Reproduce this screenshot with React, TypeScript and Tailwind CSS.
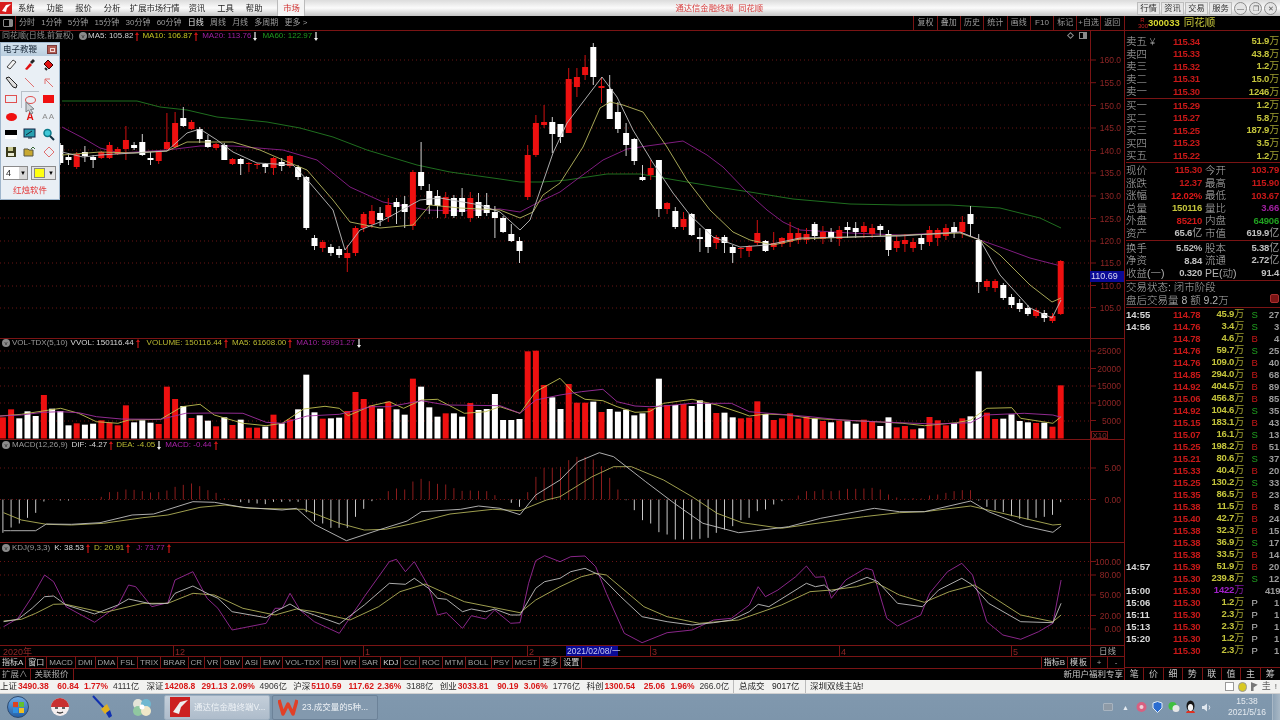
import React from "react";

const LINE = "#7a1414";
const AXIS = "#8f2626";
const X = (i: number) => 2.9 + i * 8.2;

// r = 涨 w = 跌
const colors =
  "rrwwwrwwwr" + "wwrrrrwwwr" + "rrwrwwrwrw" + "rrwrwrwwwr" + "wwrrrrwrww" + "rwwwrwwrww" + "wwwwrrrw" +
  "wrrrwrwwww" + "wrwrwrwwwr" + "wwrrrwrrrr" + "rwrwrwwrrw" + "wrrrwrrrwr" + "wwrrwwwwrw" + "rr";

const volA = [247,223,250,229,243,180,221,228,271,265,269,266,256,263,271,211,262,256,263,267,155,192,213,249,241,257,274,247,270,254,278,278,275,239,265,253,223,119,232,251,250,248,228,171,192,211,221,200,223,239,131,155,217,245,235,235,245,204,225,222,177,255,255,252,49,47,150,187];
const volB = [207,132,188,188,185,216,207,215,209,226,220,205,116,195,195,192,198,181,190,219,218,232,235,233,184,222,240,235,220,236,230,236,243,247,242,244,251,239,243,258,232,262,258,268,265,231,241,256,249,235,229,94,218,237,236,223,243,247,249,248,260,136];
const volTops = [...volA.map((t) => 335 + t / 3), ...volB.map((t) => 340 + t / 3)];

const macd = [-100,-84,-72,-55,-40,-6,0,-3,-3,0,2,1,8,22,23,30,29,25,21,22,27,38,44,48,40,28,20,4,0,-8,-10,-12,-14,-7,-7,-6,-7,-38,-65,-72,-85,-85,-85,-52,-28,-5,3,25,33,30,54,62,55,47,45,34,26,27,26,25,13,1,-10,-22,22,68,95,95,98,118,128,128,120,100,65,30,-2,-32,-62,-72,-98,-105,-120,-120,-120,-118,-115,-100,-90,-80,-62,-55,-35,-30,-15,-5,2,12,25,25,30,25,27,32,32,33,35,30,15,6,3,4,3,12,15,20,25,28,28,-3,-22,-32,-38,-50,-58,-60,-55,-52,-46,-8];

// 从第 7 根开始: 实体上, 实体下, 最高, 最低
const candles: number[][] = [
  [145,163,143,165],[157,160,153,165],[154,167,152,169],[152,156,146,162],[157,160,155,168],[152,158,151,159],[145,158,142,159],[149,154,147,155],[140,149,126,160],[145,148,142,150],
  [142,155,134,156],[158,160,152,165],[152,161,151,164],[142,149,113,150],[123,147,112,148],[118,126,107,127],[122,129,120,130],[129,139,127,143],[140,147,135,148],[144,148,143,150],
  [145,160,143,160],[159,164,158,165],[159,164,158,175],[163,164,162,172],[164,165,163,169],[164,167,163,173],[158,168,157,175],[162,166,158,171],[156,166,155,168],[167,177,165,180],
  [177,228,176,230],[238,246,235,250],[242,248,240,252],[247,253,244,256],[249,255,246,258],[253,258,245,272],[228,253,226,256],[214,228,212,232],[211,224,205,228],[213,220,207,226],
  [205,217,198,222],[202,207,198,224],[204,212,196,228],[172,226,170,230],[172,186,142,190],[191,205,184,214],[196,206,190,218],[197,214,192,218],[198,216,195,218],[198,212,188,216],
  [198,218,192,222],[202,216,193,218],[205,213,193,216],[212,218,206,238],[218,232,216,233],[234,241,224,242],[241,251,237,263],[155,197,145,200],[123,155,115,157],[122,125,105,128],
  [122,134,117,153],[124,137,124,143],[79,133,68,133],[77,87,68,97],[67,75,55,80],[47,77,43,85],[86,88,77,103],[89,119,75,119],[112,129,102,133],[133,145,123,156],
  [139,161,138,165],[177,180,165,181],[168,175,160,180],[160,209,160,217],[203,209,202,214],[211,227,207,229],[219,227,212,230],[214,235,213,236],[237,239,228,252],[229,247,229,253],
  [237,243,235,249],[237,243,235,253],[247,253,245,263],[248,249,247,258],[246,251,245,257],[233,243,220,245],[241,251,240,252],[243,247,232,250],[238,244,237,247],[233,242,222,247],
  [233,240,228,244],[234,240,228,244],[224,236,222,240],[232,239,226,244],[232,238,228,242],[230,239,226,246],[227,230,222,238],[228,232,222,238],[226,232,222,238],[228,234,224,238],
  [226,230,224,236],[234,250,230,256],[241,248,236,252],[240,244,234,252],[242,248,238,252],[238,244,234,250],[230,242,226,246],[230,238,228,246],[228,236,224,240],[227,232,222,238],
  [222,232,216,238],[214,224,206,236],[240,282,234,293],[281,287,279,291],[281,288,279,292],[285,298,283,300],[297,305,294,308],[303,309,299,312],[308,314,305,316],[310,316,308,318],
  [313,318,310,322],[316,321,313,323],[261,314,260,315],
];

const ma60 = "62,101 137,101 160,107 187,110 217,117 267,122 300,128 333,137 367,150 417,165 450,172 500,179 520,182 543,182 567,180 607,174 640,174 687,182 717,187 750,192 793,199 850,204 900,205 950,205 1000,208 1040,218 1061,228";
const ma20 = "62,127 83,138 100,148 120,153 167,150 200,146 233,146 283,150 317,160 350,187 383,202 427,210 460,211 500,209 520,212 537,203 560,192 580,177 603,160 627,149 647,146 683,141 707,155 723,167 747,192 767,210 783,222 800,230 850,233 900,235 960,232 980,240 1000,247 1030,258 1061,266";
const ma10 = "62,155 100,152 133,153 167,151 187,142 233,142 260,150 283,160 307,170 333,200 350,222 380,228 413,225 430,205 460,208 500,210 520,218 533,212 543,195 560,183 583,147 600,108 610,102 623,105 643,112 667,147 687,180 710,210 733,232 750,240 773,245 800,239 880,236 960,233 980,240 1000,255 1030,285 1052,302 1061,298";
const ma5 = "62,152 83,157 100,155 133,153 167,151 187,133 200,129 217,140 233,152 257,163 293,165 310,183 333,210 345,250 360,230 380,222 420,200 440,198 480,205 500,212 520,230 530,220 553,153 567,123 602,77 617,97 633,130 653,163 673,193 690,215 713,237 740,247 767,245 800,238 900,236 960,232 980,240 1000,275 1030,308 1052,318 1061,300";

const pts = (ox: number, oy: number, raw: number[][]) => raw.map(([x, y]) => `${(ox + x / 2.8).toFixed(1)},${(oy + y / 3).toFixed(1)}`).join(" ");

const volY = pts(0, 335, [[0,243],[60,238],[120,228],[170,220],[220,235],[270,260],[330,265],[360,255],[450,253],[510,215],[560,208],[600,240],[680,265],[745,272],[790,265],[850,222],[910,214],[950,220],[975,242],[1040,212],[1090,200],[1130,220],[1180,195],[1225,193],[1300,235],[1360,230],[1400,215],[1456,235],[1500,170]]) + " " + pts(560, 340, [[0,115],[40,160],[70,178],[120,182],[160,200],[210,217],[250,215],[290,190],[370,178],[440,195],[510,220],[530,228],[580,222],[640,225],[700,235],[790,240],[880,245],[960,250],[1020,257],[1110,248],[1150,240],[1195,205],[1265,203],[1290,235],[1380,250],[1403,230]]);
const volP = pts(0, 335, [[0,243],[60,240],[120,232],[170,230],[220,233],[270,245],[340,252],[450,253],[520,235],[600,234],[680,235],[745,262],[790,265],[860,243],[950,238],[1040,215],[1090,215],[1180,197],[1250,210],[1400,212],[1456,235],[1500,195]]) + " " + pts(560, 340, [[0,165],[60,155],[120,148],[160,185],[210,198],[250,200],[290,198],[370,190],[480,190],[530,215],[700,230],[790,240],[880,245],[950,248],[1050,252],[1150,248],[1190,225],[1300,220],[1380,225],[1403,232]]);

const difL = pts(0, 440, [[10,272],[30,272],[100,272],[130,252],[200,253],[280,248],[370,225],[430,222],[540,185],[600,187],[680,202],[790,210],[830,205],[880,253],[970,302],[1060,270],[1140,243],[1180,215],[1290,208],[1340,198],[1400,205],[1456,224],[1500,165]]) + " " + pts(560, 340, [[0,420],[50,365],[110,338],[150,350],[240,425],[320,490],[400,550],[500,578],[550,572],[640,560],[730,535],[880,505],[950,515],[1020,515],[1150,483],[1200,515],[1300,558],[1380,577],[1403,558]]);
const deaL = pts(0, 440, [[10,218],[60,240],[130,253],[200,255],[290,250],[400,233],[470,225],[560,202],[630,195],[700,205],[850,208],[950,250],[1020,270],[1080,268],[1150,252],[1260,222],[1380,208],[1456,212],[1530,180]]) + " " + pts(560, 340, [[0,470],[90,410],[150,380],[200,380],[290,420],[370,470],[440,520],[510,548],[620,565],[850,530],[950,518],[1020,515],[1150,498],[1280,530],[1380,555],[1403,553]]);

const kdjJ = pts(0, 440, [[10,560],[50,535],[90,470],[125,405],[150,425],[185,500],[265,547],[330,497],[360,435],[380,440],[425,500],[470,488],[490,420],[540,395],[580,475],[610,505],[650,570],[745,550],[770,505],[790,505],[812,460],[840,510],[880,545],[950,580],[1020,470],[1090,365],[1110,358],[1135,395],[1160,365],[1200,440],[1225,525],[1250,518],[1295,565],[1320,527],[1360,537],[1385,510],[1430,550],[1456,548],[1480,430],[1500,362],[1525,347]]) + " " + pts(560, 340, [[0,665],[30,650],[70,648],[100,680],[130,760],[180,880],[230,908],[300,878],[370,870],[430,840],[480,835],[530,795],[555,740],[575,770],[610,750],[660,710],[690,678],[715,712],[740,710],[760,775],[800,720],[855,685],[875,690],[915,835],[945,858],[1010,825],[1035,760],[1085,695],[1125,670],[1155,705],[1195,845],[1240,885],[1290,898],[1340,875],[1380,850],[1403,720]]);
const kdjK = pts(0, 440, [[10,545],[50,538],[90,505],[125,470],[150,468],[185,495],[265,522],[330,495],[360,477],[425,492],[470,490],[490,460],[540,438],[580,460],[610,475],[650,515],[745,533],[770,515],[812,492],[840,510],[880,525],[950,552],[1020,495],[1090,430],[1135,433],[1160,415],[1200,445],[1225,475],[1250,478],[1295,515],[1320,507],[1360,515],[1385,507],[1430,525],[1456,525],[1500,445],[1525,425]]) + " " + pts(560, 340, [[0,715],[30,695],[70,685],[110,705],[170,770],[230,830],[300,845],[370,855],[430,848],[480,840],[530,815],[555,793],[585,800],[690,730],[715,740],[740,735],[760,755],[860,712],[890,725],[945,790],[1015,800],[1060,750],[1125,715],[1155,735],[1200,790],[1290,845],[1380,848],[1403,790]]);
const kdjD = pts(0, 440, [[10,543],[60,538],[100,520],[150,493],[180,492],[290,518],[400,490],[470,490],[540,460],[600,465],[680,505],[770,525],[830,507],[880,515],[980,540],[1060,500],[1120,455],[1190,432],[1300,485],[1456,518],[1500,480]]) + " " + pts(560, 340, [[0,740],[60,710],[100,700],[130,705],[235,800],[300,830],[390,850],[500,840],[620,795],[700,755],[760,750],[830,740],[880,725],[950,765],[1020,787],[1090,755],[1160,735],[1290,825],[1380,845],[1403,825]]);

const Line = ({ p, c }: { p: string; c: string }) => <polyline points={p} fill="none" stroke={c} strokeWidth={0.9} strokeLinejoin="round" />;

function Arrow({ up }: { up?: boolean }) {
  return (
    <svg width="4" height="9" viewBox="0 0 4 9" className="shrink-0">
      {up ? <path d="M2 0 L4 3 H2.6 V9 H1.4 V3 H0 Z" fill="#c81414" /> : <path d="M2 9 L4 6 H2.6 V0 H1.4 V6 H0 Z" fill="#eeeeee" />}
    </svg>
  );
}

const Dot = () => (
  <span className="w-[8px] h-[8px] rounded-full bg-[#8a8a8a] shrink-0 flex items-center justify-center text-[6px] leading-none text-[#222]">v</span>
);

function Panel({ top, h, ticks, grid, children, labels }: { top: number; h: number; ticks: [string, number][]; grid: number[]; children: React.ReactNode; labels?: React.ReactNode }) {
  return (
    <div className="relative w-full shrink-0" style={{ height: h }}>
      <svg width="1124" height={h} viewBox={`0 ${top} 1124 ${h}`} className="block text-[8.5px]">
        {grid.map((y) => (
          <line key={y} x1="0" x2="1090" y1={y} y2={y} stroke="#6a1414" strokeWidth="1" strokeDasharray="1 3" />
        ))}
        {children}
        <line x1="0" x2="1124" y1={top + 0.5} y2={top + 0.5} stroke={LINE} />
        <line x1="1090.5" x2="1090.5" y1={top} y2={top + h} stroke={LINE} />
        {ticks.map(([t, y]) => (
          <g key={t}>
            <line x1="1091" x2="1096" y1={y} y2={y} stroke={LINE} />
            <text x="1121" y={y + 3} textAnchor="end" fill={AXIS}>{t}</text>
          </g>
        ))}
      </svg>
      {labels}
    </div>
  );
}

type LegendItem = { t: string; c: string; up?: boolean; down?: boolean; ml?: string };

function Legend({ items, cls }: { items: LegendItem[]; cls: string }) {
  return (
    <div className={`absolute flex items-center h-[10px] text-[8px] leading-none whitespace-nowrap ${cls}`}>
      {items.map((it, i) => (
        <React.Fragment key={i}>
          <span className={it.ml} style={{ color: it.c }}>{it.t}</span>
          {it.up && <span className="ml-[2px]"><Arrow up /></span>}
          {it.down && <span className="ml-[2px]"><Arrow /></span>}
        </React.Fragment>
      ))}
    </div>
  );
}

const Tool = ({ children, on }: { children: React.ReactNode; on?: boolean }) => (
  <div className={`h-[17.4px] flex items-center justify-center ${on ? "border-l border-t border-[#b8c0c8]" : ""}`}>{children}</div>
);

function Toolbox() {
  return (
    <div className="absolute left-0 top-[12px] w-[60px] h-[158px] bg-[#e9eff5] border border-[#9fb6cc] flex flex-col">
      <div className="h-[13px] bg-gradient-to-b from-[#d4e2ee] to-[#b9cede] flex items-center justify-between pl-[2px] pr-[2px] text-[8.5px] text-[#1a2a3a]">
        <span>电子教鞭</span>
        <span className="w-[10px] h-[9px] bg-[#b05a50] border border-[#7a3a3a] flex items-center justify-center">
          <span className="w-[5px] h-[4px] border border-[#f0d8d8]" />
        </span>
      </div>
      <div className="grid grid-cols-3 px-[1px]">
        <Tool><svg width="13" height="13" viewBox="0 0 13 13"><path d="M2 9 L8 2 L11 4 L5 11 Z" fill="#f4f4f4" stroke="#444" /></svg></Tool>
        <Tool><svg width="13" height="13" viewBox="0 0 13 13"><path d="M2 11 L7 5 L9 7 L4 12 Z" fill="#e01010" /><path d="M7 4 L10 1 L12 3 L9 6 Z" fill="#222" /></svg></Tool>
        <Tool><svg width="13" height="13" viewBox="0 0 13 13"><path d="M2 6 L6 2 L11 7 L7 11 Z" fill="#e01010" stroke="#300" /><path d="M3 10 L5 12" stroke="#222" strokeWidth="2" /></svg></Tool>
        <Tool><svg width="13" height="13" viewBox="0 0 13 13"><path d="M1 2 L4 1 L12 9 L11 12 L8 11 Z" fill="#ddd" stroke="#222" /></svg></Tool>
        <Tool><svg width="13" height="13" viewBox="0 0 13 13"><path d="M2 2 L11 11" stroke="#e07070" /></svg></Tool>
        <Tool><svg width="13" height="13" viewBox="0 0 13 13"><path d="M11 11 L3 3 M3 3 H8 M3 3 V8" stroke="#e07070" fill="none" /></svg></Tool>
        <Tool><span className="w-[12px] h-[8px] border border-[#e05050]" /></Tool>
        <Tool on><span className="w-[11px] h-[8px] border border-[#e05050] rounded-[50%]" /></Tool>
        <Tool><span className="w-[11px] h-[8px] bg-[#f01010]" /></Tool>
        <Tool><span className="w-[11px] h-[8px] bg-[#f01010] rounded-[50%]" /></Tool>
        <Tool><span className="text-[10px] font-bold text-[#e01010] leading-none">A</span></Tool>
        <Tool><span className="text-[8px] text-[#8a8a8a] leading-none tracking-[1px]">AA</span></Tool>
        <Tool><span className="w-[12px] h-[9px] bg-gradient-to-b from-black from-60% to-white to-60%" /></Tool>
        <Tool><svg width="13" height="12" viewBox="0 0 13 12"><rect x="1" y="1" width="11" height="8" fill="#28a0b0" stroke="#124" /><path d="M3 7 L9 3 M5 10 H9" stroke="#123" /></svg></Tool>
        <Tool><svg width="13" height="13" viewBox="0 0 13 13"><circle cx="5.5" cy="5" r="3.5" fill="#40c8d8" stroke="#0a7a8a" strokeWidth="1.5" /><path d="M8 8 L12 12" stroke="#103040" strokeWidth="2" /></svg></Tool>
        <Tool><svg width="12" height="12" viewBox="0 0 12 12"><rect x="1" y="1" width="10" height="10" fill="#3a3a1a" /><rect x="3" y="1" width="5" height="4" fill="#c8c890" /><rect x="3" y="7" width="6" height="3" fill="#e8e8d0" /></svg></Tool>
        <Tool><svg width="13" height="12" viewBox="0 0 13 12"><path d="M1 3 H5 L6 4 H10 V10 H1 Z" fill="#c8a830" stroke="#554" /><path d="M8 3 L10 1 L12 3" stroke="#363" fill="none" /></svg></Tool>
        <Tool><svg width="12" height="12" viewBox="0 0 12 12"><path d="M6 1 L11 6 L6 11 L1 6 Z" fill="none" stroke="#e07070" /></svg></Tool>
      </div>
      <div className="flex gap-[3px] mt-[6px] mx-[2px]">
        <div className="w-[25px] h-[14px] border border-[#8a8a8a] bg-white flex items-center text-[9px] text-[#222] pl-[2px] justify-between">
          <span>4</span>
          <span className="w-[8px] h-full bg-[#d8d8d8] text-[6px] leading-[12px] text-center text-black">▼</span>
        </div>
        <div className="w-[25px] h-[14px] border border-[#8a8a8a] bg-[#e4e4e4] flex items-center pl-[2px] justify-between">
          <span className="w-[11px] h-[10px] bg-[#ffff10] border border-[#888]" />
          <span className="w-[8px] text-[6px] text-center text-black">▼</span>
        </div>
      </div>
      <div className="text-center text-[#e43a3a] text-[8.5px] mt-[6px] leading-none">红烛软件</div>
      <svg width="11" height="14" viewBox="0 0 11 14" className="absolute left-[24px] top-[58px]">
        <path d="M1 1 L1 11 L3.5 9 L6 13 L8 12 L5.5 8.5 L9 8 Z" fill="#cfd4d8" stroke="#7a7f84" />
      </svg>
    </div>
  );
}

function MainChart() {
  const ticks: [string, number][] = [["160.0",60],["155.0",82.7],["150.0",105.5],["145.0",128],["140.0",150.5],["135.0",173],["130.0",196],["125.0",218.5],["120.0",241],["115.0",263],["110.0",285.5],["105.0",307.5]];
  return (
    <Panel
      top={30}
      h={308}
      ticks={ticks}
      grid={[60,83,105,128,150,173,196,218,241,263,286,308]}
      labels={
        <>
          <Legend cls="top-[1px] left-[2px]" items={[{ t: "同花顺(日线,前复权)", c: "#8f8f8f" }]} />
          <div className="absolute left-[79px] top-[1px] h-[10px] flex items-center"><Dot /></div>
          <Legend
            cls="top-[1px] left-[88px]"
            items={[
              { t: "MA5: 105.82", c: "#d0d0d0", up: true },
              { t: "MA10: 106.87", c: "#c4c420", up: true, ml: "ml-[3px]" },
              { t: "MA20: 113.76", c: "#a020a0", down: true, ml: "ml-[4px]" },
              { t: "MA60: 122.97", c: "#1f9a1f", down: true, ml: "ml-[5px]" },
            ]}
          />
          <div className="absolute left-[1068px] top-[2px] flex items-center gap-[4px]">
            <span className="w-[5px] h-[5px] rotate-45 border border-[#8a8a8a]" />
            <span className="w-[8px] h-[7px] border border-[#8a8a8a] ml-[2px] flex justify-end"><span className="w-[3px] bg-[#8a8a8a]" /></span>
          </div>
          <Toolbox />
          <div className="absolute left-[1090px] top-[241px] w-[34px] h-[11px] bg-[#0a0a96] text-[#d8d8f0] text-[9px] leading-[11px] pl-[1px]">110.69</div>
        </>
      }
    >
      <Line p={ma60} c="#237a23" />
      <Line p={ma20} c="#8d1f8d" />
      {candles.map((k, n) => {
        const i = n + 7;
        const red = colors[i] === "r";
        return (
          <g key={i}>
            <line x1={X(i)} x2={X(i)} y1={k[2]} y2={k[3]} stroke={red ? "#d01010" : "#cfcfcf"} />
            <rect x={X(i) - 3} y={k[0]} width="6" height={k[1] - k[0]} fill={red ? "#ee1010" : "#ffffff"} />
          </g>
        );
      })}
      <Line p={ma10} c="#b8b860" />
      <Line p={ma5} c="#c0c0c0" />
    </Panel>
  );
}

function VolChart() {
  return (
    <Panel
      top={338}
      h={101}
      ticks={[["25000",351],["20000",368.5],["15000",386],["10000",403],["5000",420.5]]}
      grid={[351,368,386,403,421]}
      labels={
        <>
          <div className="absolute left-[2px] top-0 h-[10px] flex items-center"><Dot /></div>
          <Legend
            cls="top-0 left-[12px]"
            items={[
              { t: "VOL-TDX(5,10)", c: "#9a9a9a" },
              { t: "VVOL: 150116.44", c: "#d8d8d8", up: true, ml: "ml-[3px]" },
              { t: "VOLUME: 150116.44", c: "#b8b830", up: true, ml: "ml-[7px]" },
              { t: "MA5: 61608.00", c: "#b8b830", up: true, ml: "ml-[4px]" },
              { t: "MA10: 59991.27", c: "#9a209a", down: true, ml: "ml-[4px]" },
            ]}
          />
          <div className="absolute left-[1091px] top-[93px] w-[17px] h-[8px] border border-[#7a1414] text-[#8f3030] text-[8px] leading-[7px] text-center">X10</div>
        </>
      }
    >
      {volTops.map((t, i) => (
        <rect key={i} x={X(i) - 3} y={t} width="6" height={438.5 - t} fill={colors[i] === "r" ? "#ee1010" : "#ffffff"} />
      ))}
      <Line p={volY} c="#c0c050" />
      <Line p={volP} c="#a030a0" />
    </Panel>
  );
}

function MacdChart() {
  return (
    <Panel
      top={439}
      h={103}
      ticks={[["5.00",468],["0.00",499.5]]}
      grid={[468,499.5]}
      labels={
        <>
          <div className="absolute left-[2px] top-[1px] h-[10px] flex items-center"><Dot /></div>
          <Legend
            cls="top-[1px] left-[12px]"
            items={[
              { t: "MACD(12,26,9)", c: "#9a9a9a" },
              { t: "DIF: -4.27", c: "#d8d8d8", up: true, ml: "ml-[4px]" },
              { t: "DEA: -4.05", c: "#b8b830", down: true, ml: "ml-[3px]" },
              { t: "MACD: -0.44", c: "#a820a8", up: true, ml: "ml-[4px]" },
            ]}
          />
        </>
      }
    >
      {macd.map((v, i) => (
        <line key={i} x1={X(i)} x2={X(i)} y1="499.5" y2={499.5 - v / 3} stroke={v > 0 ? "#8c1c1c" : "#c8c8c8"} />
      ))}
      <Line p={deaL} c="#b0b058" />
      <Line p={difL} c="#c0c0c0" />
    </Panel>
  );
}

function KdjChart() {
  return (
    <Panel
      top={542}
      h={103}
      ticks={[["100.00",561.5],["80.00",575],["50.00",595],["20.00",615.5],["0.00",629]]}
      grid={[561.5,575,595,615.5,628]}
      labels={
        <>
          <div className="absolute left-[2px] top-[1px] h-[10px] flex items-center"><Dot /></div>
          <Legend
            cls="top-[1px] left-[12px]"
            items={[
              { t: "KDJ(9,3,3)", c: "#9a9a9a" },
              { t: "K: 38.53", c: "#d8d8d8", up: true, ml: "ml-[4px]" },
              { t: "D: 20.91", c: "#b8b830", up: true, ml: "ml-[4px]" },
              { t: "J: 73.77", c: "#a020a0", up: true, ml: "ml-[6px]" },
            ]}
          />
        </>
      }
    >
      <Line p={kdjJ} c="#982a98" />
      <Line p={kdjD} c="#b0b058" />
      <Line p={kdjK} c="#c0c0c0" />
    </Panel>
  );
}

function DateAxis() {
  const marks: [number, string][] = [[3, "2020年"], [175, "12"], [365, "1"], [529, "2"], [652, "3"], [841, "4"], [1013, "5"]];
  return (
    <div className="h-[10px] shrink-0 flex border-t border-b border-[#7a1414] box-content">
      <svg width="1090" height="10" viewBox="0 0 1090 10" className="block shrink-0 text-[9px]">
        {marks.map(([x, t]) => (
          <g key={x}>
            {x > 3 && <line x1={x - 1.5} x2={x - 1.5} y1="0" y2="10" stroke={LINE} />}
            <text x={x} y="8.5" fill={AXIS}>{t}</text>
          </g>
        ))}
        <rect x="566" y="0" width="52" height="10" fill="#0a0a96" />
        <text x="567" y="8" fill="#c8c8f0" fontSize="8.5">2021/02/08/一</text>
      </svg>
      <div className="flex-1 border-l border-[#7a1414] text-center text-[8.5px] leading-[10px] text-[#a8a8a8]">日线</div>
    </div>
  );
}

const tabs = ["窗口","MACD","DMI","DMA","FSL","TRIX","BRAR","CR","VR","OBV","ASI","EMV","VOL-TDX","RSI","WR","SAR","KDJ","CCI","ROC","MTM","BOLL","PSY","MCST","更多","设置"];

function TabBar() {
  return (
    <div className="h-[11px] shrink-0 flex items-center text-[8px] leading-none text-[#a0a0a0] border-b border-[#7a1414] box-content whitespace-nowrap">
      <span className="px-[2px] border-r border-[#7a1414] h-full flex items-center text-[#d8d8d8]">指标A</span>
      {tabs.map((t) => (
        <span key={t} className={`px-[2px] border-r border-[#7a1414] h-full flex items-center ${t === "窗口" || t === "KDJ" || t === "设置" ? "text-[#d8d8d8]" : ""}`}>{t}</span>
      ))}
      <span className="ml-auto px-[2px] h-full flex items-center border-l border-[#7a1414] text-[#d0d0d0]">指标B</span>
      <span className="pl-[2px] h-full flex items-center border-l border-[#7a1414] text-[#d0d0d0] w-[23px] tracking-[1px]">模板</span>
      <span className="h-full w-[17px] flex items-center justify-center border-l border-[#7a1414]">+</span>
      <span className="h-full w-[17px] flex items-center justify-center border-l border-[#7a1414]">-</span>
    </div>
  );
}

const periods = ["分时","1分钟","5分钟","15分钟","30分钟","60分钟","日线","周线","月线","多周期","更多 >"];
const rightTools = ["复权","叠加","历史","统计","画线","F10","标记","+自选","返回"];

function ChartToolbar() {
  return (
    <div className="h-[14px] shrink-0 flex items-center text-[8px] leading-none text-[#9c9c9c]">
      <span className="w-[16px] h-full flex items-center justify-center border-r border-[#7a1414]">
        <span className="w-[10px] h-[8px] border border-[#8a8a8a] rounded-[1px] flex justify-end"><span className="w-[3px] bg-[#8a8a8a]" /></span>
      </span>
      <div className="flex gap-[6.2px] ml-[3px]">
        {periods.map((p) => (
          <span key={p} className={p === "日线" ? "text-[#e4e4e4]" : ""}>{p}</span>
        ))}
      </div>
      <div className="ml-auto flex h-full border-l border-[#7a1414]">
        {rightTools.map((t) => (
          <span key={t} className="w-[23.3px] h-full flex items-center justify-center border-r border-[#7a1414] last:border-r-0">{t}</span>
        ))}
      </div>
    </div>
  );
}

const Wan = ({ v, c = "#c4c43c" }: { v: string; c?: string }) => {
  const unit = v.slice(-1);
  const hasUnit = unit === "万" || unit === "亿";
  return (
    <span style={{ color: c }} className="font-bold">
      {hasUnit ? v.slice(0, -1) : v}
      {hasUnit && <span className="font-normal text-[10px] opacity-80">{unit}</span>}
    </span>
  );
};

const sells = [["卖五","115.34","51.9万"],["卖四","115.33","43.8万"],["卖三","115.32","1.2万"],["卖二","115.31","15.0万"],["卖一","115.30","1246万"]];
const buys = [["买一","115.29","1.2万"],["买二","115.27","5.8万"],["买三","115.25","187.9万"],["买四","115.23","3.5万"],["买五","115.22","1.2万"]];

function BookRow({ r, yen }: { r: string[]; yen?: boolean }) {
  return (
    <div className="h-[12.6px] flex items-center leading-none">
      <span className="w-[47px] text-[10.5px] text-[#b4b4b4] font-light">{r[0]}{yen && <span className="text-[9px] ml-[1px]">￥</span>}</span>
      <span className="text-[#c81818] text-[9.5px] font-bold tracking-[-0.3px]">{r[1]}</span>
      <span className="ml-auto text-[9.5px] tracking-[-0.2px] mr-[1px]"><Wan v={r[2]} /></span>
    </div>
  );
}

const info: [string, string, string, string, string, string][] = [
  ["现价","115.30","#c81818","今开","103.79","#c81818"],
  ["涨跌","12.37","#c81818","最高","115.90","#c81818"],
  ["涨幅","12.02%","#e01818","最低","103.67","#c81818"],
  ["总量","150116","#c4c43c","量比","3.66","#a020a0"],
  ["外盘","85210","#d01818","内盘","64906","#20a020"],
  ["资产","65.6亿","#c0c0c0","市值","619.9亿","#c0c0c0"],
];
const info2: typeof info = [
  ["换手","5.52%","#c0c0c0","股本","5.38亿","#c0c0c0"],
  ["净资","8.84","#c0c0c0","流通","2.72亿","#c0c0c0"],
  ["收益(一)","0.320","#c0c0c0","PE(动)","91.4","#c0c0c0"],
];

function InfoRow({ r }: { r: (typeof info)[number] }) {
  return (
    <div className="h-[12.6px] grid grid-cols-[76px_1fr] items-center leading-none">
      <div className="flex items-center justify-between">
        <span className="text-[10.5px] text-[#b4b4b4] font-light whitespace-nowrap">{r[0]}</span>
        <span className="text-[9.5px] tracking-[-0.2px]"><Wan v={r[1]} c={r[2]} /></span>
      </div>
      <div className="flex items-center justify-between pl-[3px] pr-[1px]">
        <span className="text-[10.5px] text-[#b4b4b4] font-light whitespace-nowrap">{r[3]}</span>
        <span className="text-[9.5px] tracking-[-0.2px]"><Wan v={r[4]} c={r[5]} /></span>
      </div>
    </div>
  );
}

const trades: string[][] = [
  ["14:55","114.78","45.9万","S","27"],["14:56","114.76","3.4万","S","3"],["","114.78","4.6万","B","4"],["","114.76","59.7万","S","25"],["","114.76","109.0万","B","40"],
  ["","114.85","294.0万","B","68"],["","114.92","404.5万","B","89"],["","115.06","456.8万","B","85"],["","114.92","104.6万","S","35"],["","115.15","183.1万","B","43"],
  ["","115.07","16.1万","S","13"],["","115.25","198.2万","B","51"],["","115.21","80.6万","S","37"],["","115.33","40.4万","B","20"],["","115.25","130.2万","S","33"],
  ["","115.35","86.5万","B","23"],["","115.38","11.5万","B","8"],["","115.40","42.7万","B","24"],["","115.38","32.3万","B","15"],["","115.38","36.9万","S","17"],
  ["","115.38","33.5万","B","14"],["14:57","115.39","51.9万","B","20"],["","115.30","239.8万","S","12"],["15:00","115.30","1422万","","419"],["15:06","115.30","1.2万","P","1"],
  ["15:11","115.30","2.3万","P","1"],["15:13","115.30","2.3万","P","1"],["15:20","115.30","1.2万","P","1"],["","115.30","2.3万","P","1"],
];

const flagColor: Record<string, string> = { S: "text-[#20a020]", B: "text-[#c81818]", P: "text-[#c0c0c0]", "": "" };

function TradeRow({ r }: { r: string[] }) {
  return (
    <div className="h-[12px] grid grid-cols-[47px_30px_41px_21px_1fr] items-center leading-none text-[9.5px] tracking-[-0.2px]">
      <span className="text-[#d8d8d8] font-bold tracking-normal">{r[0]}</span>
      <span className="text-[#c81818] font-bold">{r[1]}</span>
      <span className="text-right"><Wan v={r[2]} c={r[2] === "1422万" ? "#a020c8" : "#c4c43c"} /></span>
      <span className={`text-center ${flagColor[r[3]]}`}>{r[3]}</span>
      <span className="text-right text-[#9a9a9a] font-bold pr-[1px]">{r[4]}</span>
    </div>
  );
}

function RightPanel() {
  return (
    <div className="flex-1 flex flex-col min-w-0 border-l border-[#7a1414] pl-[1px]">
      <div className="h-[14px] shrink-0 flex items-center border-b border-[#7a1414] box-content -ml-[1px]">
        <span className="ml-[13px] w-[9px] text-[#c82020] text-[6px] leading-[6px] text-center">R<br />300</span>
        <span className="text-[#d8d830] text-[9.5px] font-bold ml-[1px]">300033</span>
        <span className="text-[#c8c83c] text-[10.5px] ml-[4px]">同花顺</span>
      </div>
      <div className="pt-[4px] border-b border-[#7a1414]">
        {sells.map((r, i) => <BookRow key={r[0]} r={r} yen={i === 0} />)}
      </div>
      <div className="border-b border-[#7a1414]">
        {buys.map((r) => <BookRow key={r[0]} r={r} />)}
      </div>
      <div className="pt-[1px] border-b border-[#7a1414]">
        {info.map((r) => <InfoRow key={r[0]} r={r} />)}
      </div>
      <div className="pt-[1px] pb-[1px] border-b border-[#7a1414]">
        {info2.map((r) => <InfoRow key={r[0]} r={r} />)}
      </div>
      <div className="border-b border-[#7a1414] relative text-[10.5px] text-[#b4b4b4] font-light leading-none pb-[1px]">
        <div className="h-[12.5px] flex items-center">交易状态: 闭市阶段</div>
        <div className="h-[12.5px] flex items-center">盘后交易量 8 额 9.2万</div>
        <span className="absolute right-[1px] top-[13px] w-[9px] h-[9px] rounded-[2px] bg-[#7a1414] border border-[#a83030]" />
      </div>
      <div className="flex-1">
        {trades.map((r, i) => <TradeRow key={i} r={r} />)}
      </div>
      <div className="h-[12px] shrink-0 grid grid-cols-8 border-t border-[#7a1414] box-content text-[9px] text-[#c8c8c8] leading-[12px] text-center -ml-[1px]">
        {["笔","价","细","势","联","值","主","筹"].map((t) => <span key={t} className="border-r border-[#7a1414] last:border-r-0">{t}</span>)}
      </div>
    </div>
  );
}

function TitleBar() {
  return (
    <div className="h-[16px] shrink-0 flex items-center bg-gradient-to-b from-[#dcdcdc] via-[#fbfbfb] to-[#c4c4c4] text-[8.3px] leading-none text-[#222]">
      <svg width="12" height="12" viewBox="0 0 12 12" className="shrink-0">
        <rect width="12" height="12" fill="#d81e1e" />
        <path d="M2 9 L6 3 L11 2 L7 6 L6 10 Z" fill="#fff" />
      </svg>
      <div className="flex gap-[12px] ml-[6px]">
        {["系统","功能","报价","分析"].map((t) => <span key={t}>{t}</span>)}
        <span className="-ml-[2.6px]">扩展市场行情</span>
        <span className="-ml-[3px]">资讯</span>
        <span>工具</span>
        <span>帮助</span>
      </div>
      <span className="ml-[15px] h-full w-[28px] flex items-center justify-center text-[#d03030] border-l border-r border-[#bbb] bg-[#f4f4f4]">市场</span>
      <span className="ml-[370px] text-[#d84040] whitespace-nowrap">通达信金融终端&nbsp;&nbsp;同花顺</span>
      <div className="ml-auto flex items-center gap-[1px] mr-[3px]">
        {["行情","资讯","交易","服务"].map((t) => (
          <span key={t} className="w-[23px] h-[13px] flex items-center justify-center bg-[#e6e6e6] border border-[#bdbdbd] text-[#333]">{t}</span>
        ))}
        {["—","❐","✕"].map((t) => (
          <span key={t} className="ml-[1px] w-[13px] h-[13px] rounded-full border border-[#8a8a8a] flex items-center justify-center text-[7px] text-[#555] bg-[#e4e4e4]">{t}</span>
        ))}
      </div>
    </div>
  );
}

const market = [
  { n: "上证", a: ["3490.38","60.84","1.77%"], v: "4111亿" },
  { n: "深证", a: ["14208.8","291.13","2.09%"], v: "4906亿" },
  { n: "沪深", a: ["5110.59","117.62","2.36%"], v: "3188亿" },
  { n: "创业", a: ["3033.81","90.19","3.06%"], v: "1776亿" },
  { n: "科创", a: ["1300.54","25.06","1.96%"], v: "266.0亿" },
];

function MarketBar() {
  return (
    <div className="h-[13px] shrink-0 flex items-center bg-[#f2f2f0] text-[8.5px] leading-none text-[#222] whitespace-nowrap border-b border-[#d0d0d0] box-content">
      {market.map((m) => (
        <div key={m.n} className="flex items-center w-[146.6px] shrink-0">
          <span className="w-[18px] shrink-0">{m.n}</span>
          <span className="text-[#d81818] font-bold w-[36px] shrink-0">{m.a[0]}</span>
          <span className="text-[#d81818] font-bold w-[28px] shrink-0 text-center">{m.a[1]}</span>
          <span className="text-[#d81818] font-bold w-[31px] shrink-0 pl-[2px]">{m.a[2]}</span>
          <span className="text-[#333]">{m.v}</span>
        </div>
      ))}
      <div className="flex items-center h-full border-l border-[#bbb] pl-[5px] w-[72px] shrink-0">
        <span className="w-[33px]">总成交</span>
        <span>9017亿</span>
      </div>
      <div className="flex items-center h-full border-l border-[#bbb] pl-[4px]">深圳双线主站!</div>
      <div className="ml-auto flex items-center gap-[4px] mr-[3px]">
        <span className="w-[9px] h-[9px] border border-[#999] bg-white" />
        <span className="w-[9px] h-[10px] rounded-full bg-[#d8c820] border border-[#999]" />
        <span className="w-[7px] h-[9px] bg-[#777] [clip-path:polygon(0_0,100%_30%,40%_60%,40%_100%,0_100%)]" />
        <span className="text-[#555] text-[9px]">圭</span>
        <span className="text-[#555] text-[8px]">!</span>
      </div>
    </div>
  );
}

function TaskBar() {
  return (
    <div className="h-[26px] shrink-0 flex items-center bg-gradient-to-b from-[#8098ae] to-[#7d95ab] text-[8.5px] leading-none">
      <div className="ml-[7px] w-[22px] h-[22px] rounded-full bg-gradient-to-b from-[#6fa8e0] to-[#2260a8] border border-[#2c4a70] flex items-center justify-center shrink-0">
        <svg width="11" height="11" viewBox="0 0 11 11"><rect width="5" height="5" fill="#e04020" /><rect x="6" width="5" height="5" fill="#60c030" /><rect y="6" width="5" height="5" fill="#3090e0" /><rect x="6" y="6" width="5" height="5" fill="#f0c020" /></svg>
      </div>
      <svg width="20" height="20" viewBox="0 0 20 20" className="ml-[21px] shrink-0"><circle cx="10" cy="10" r="9" fill="#f4eeee" /><path d="M1 10 A9 9 0 0 1 19 10 Z" fill="#c83030" /><path d="M5 11 h3 M12 11 h3 M7 15 q3 2 6 0" stroke="#333" strokeWidth="1.4" fill="none" /></svg>
      <svg width="24" height="24" viewBox="0 0 24 24" className="ml-[20px] shrink-0"><path d="M3 1 L15 14" stroke="#1030b0" strokeWidth="2" /><path d="M11 14 L17 9 L20 15 L15 19 Z" fill="#e0b020" /><path d="M16 18 L20 15 L22 21 L19 23 Z" fill="#1030b0" /></svg>
      <svg width="20" height="20" viewBox="0 0 20 20" className="ml-[18px] shrink-0"><circle cx="6" cy="7" r="5" fill="#e4e4d8" /><circle cx="14" cy="7" r="5" fill="#70b8d0" /><circle cx="6" cy="14" r="5" fill="#90c8a0" /><circle cx="14" cy="14" r="5" fill="#f0e8c8" /><circle cx="10" cy="10" r="2.5" fill="#fff" /></svg>
      <div className="ml-[12px] w-[106px] h-[25px] shrink-0 rounded-[2px] border border-[#9fb0c0] bg-gradient-to-b from-[#c4cfda] to-[#aebccb] flex items-center">
        <svg width="20" height="20" viewBox="0 0 20 20" className="ml-[5px] shrink-0"><rect width="20" height="20" fill="#cc2020" /><path d="M3 15 L10 5 L18 3 L11 10 L9 17 Z" fill="#eeeeee" /></svg>
        <span className="ml-[4px] text-[#eef2f6] whitespace-nowrap">通达信金融终端V...</span>
      </div>
      <div className="ml-[2px] w-[106px] h-[25px] shrink-0 rounded-[2px] border border-[#6c8298] bg-[#8399ae] flex items-center">
        <svg width="20" height="18" viewBox="0 0 20 18" className="ml-[5px] shrink-0"><path d="M1 2 L5 16 L10 6 L15 16 L19 2" fill="none" stroke="#e04028" strokeWidth="3.5" strokeLinejoin="round" /></svg>
        <span className="ml-[4px] text-[#eef2f6] whitespace-nowrap">23.成交量的5种...</span>
      </div>
      <div className="ml-auto flex items-center gap-[5px]">
        <span className="w-[10px] h-[8px] rounded-[1px] bg-[#8e9aa6] border border-[#a8b4c0]" />
        <span className="text-[7px] text-[#e4eaf0] ml-[4px]">▲</span>
        <svg width="11" height="12" viewBox="0 0 11 12" className="ml-[2px]"><circle cx="5.5" cy="6" r="5" fill="#d86080" /><circle cx="5.5" cy="6" r="2" fill="#f0d0d8" /></svg>
        <svg width="11" height="12" viewBox="0 0 11 12"><path d="M1 2 L5.5 0.5 L10 2 V7 L5.5 11.5 L1 7 Z" fill="#2a6cd0" stroke="#e0ecf8" /></svg>
        <svg width="12" height="12" viewBox="0 0 12 12"><circle cx="4.5" cy="5" r="4" fill="#40c040" /><circle cx="8" cy="7.5" r="3.5" fill="#e8e8e8" /></svg>
        <svg width="11" height="14" viewBox="0 0 11 14"><ellipse cx="5.5" cy="6" rx="4" ry="5.5" fill="#151515" /><ellipse cx="5.5" cy="7.5" rx="2.6" ry="3.5" fill="#f4f4f4" /><path d="M2 11 H9 L10 13 H1 Z" fill="#e03020" /></svg>
        <svg width="11" height="11" viewBox="0 0 11 11"><path d="M1 4 H3 L6 1.5 V9.5 L3 7 H1 Z" fill="#dfe6ee" /><path d="M8 3.5 Q9.5 5.5 8 7.5" stroke="#dfe6ee" fill="none" /></svg>
      </div>
      <div className="ml-[14px] w-[42px] text-center text-[#e4eaf0] text-[8.5px] leading-[11px]">15:38<br />2021/5/16</div>
      <div className="ml-[4px] w-[8px] h-full bg-gradient-to-r from-[#8ea3b6] to-[#a8b8c6] border-l border-[#a9b8c6]" />
    </div>
  );
}

export default function App() {
  return (
    <div className="w-[1280px] h-[720px] overflow-hidden flex flex-col bg-black blur-[0.5px] [font-family:'Liberation_Sans','Noto_Sans_CJK_SC',sans-serif]">
      <TitleBar />
      <div className="h-[664px] shrink-0 flex">
        <div className="w-[1124px] shrink-0 flex flex-col">
          <ChartToolbar />
          <MainChart />
          <VolChart />
          <MacdChart />
          <KdjChart />
          <DateAxis />
          <TabBar />
          <div className="flex-1 flex items-center text-[8.5px] leading-none text-[#a8a8a8]">
            <span className="px-[2px] h-full flex items-center border-r border-[#7a1414]">扩展∧</span>
            <span className="px-[4px] h-full flex items-center border-r border-[#7a1414]">关联报价</span>
            <span className="ml-auto pr-[1px] text-[#c8c8c8]">新用户福利专享</span>
          </div>
        </div>
        <RightPanel />
      </div>
      <MarketBar />
      <TaskBar />
    </div>
  );
}
